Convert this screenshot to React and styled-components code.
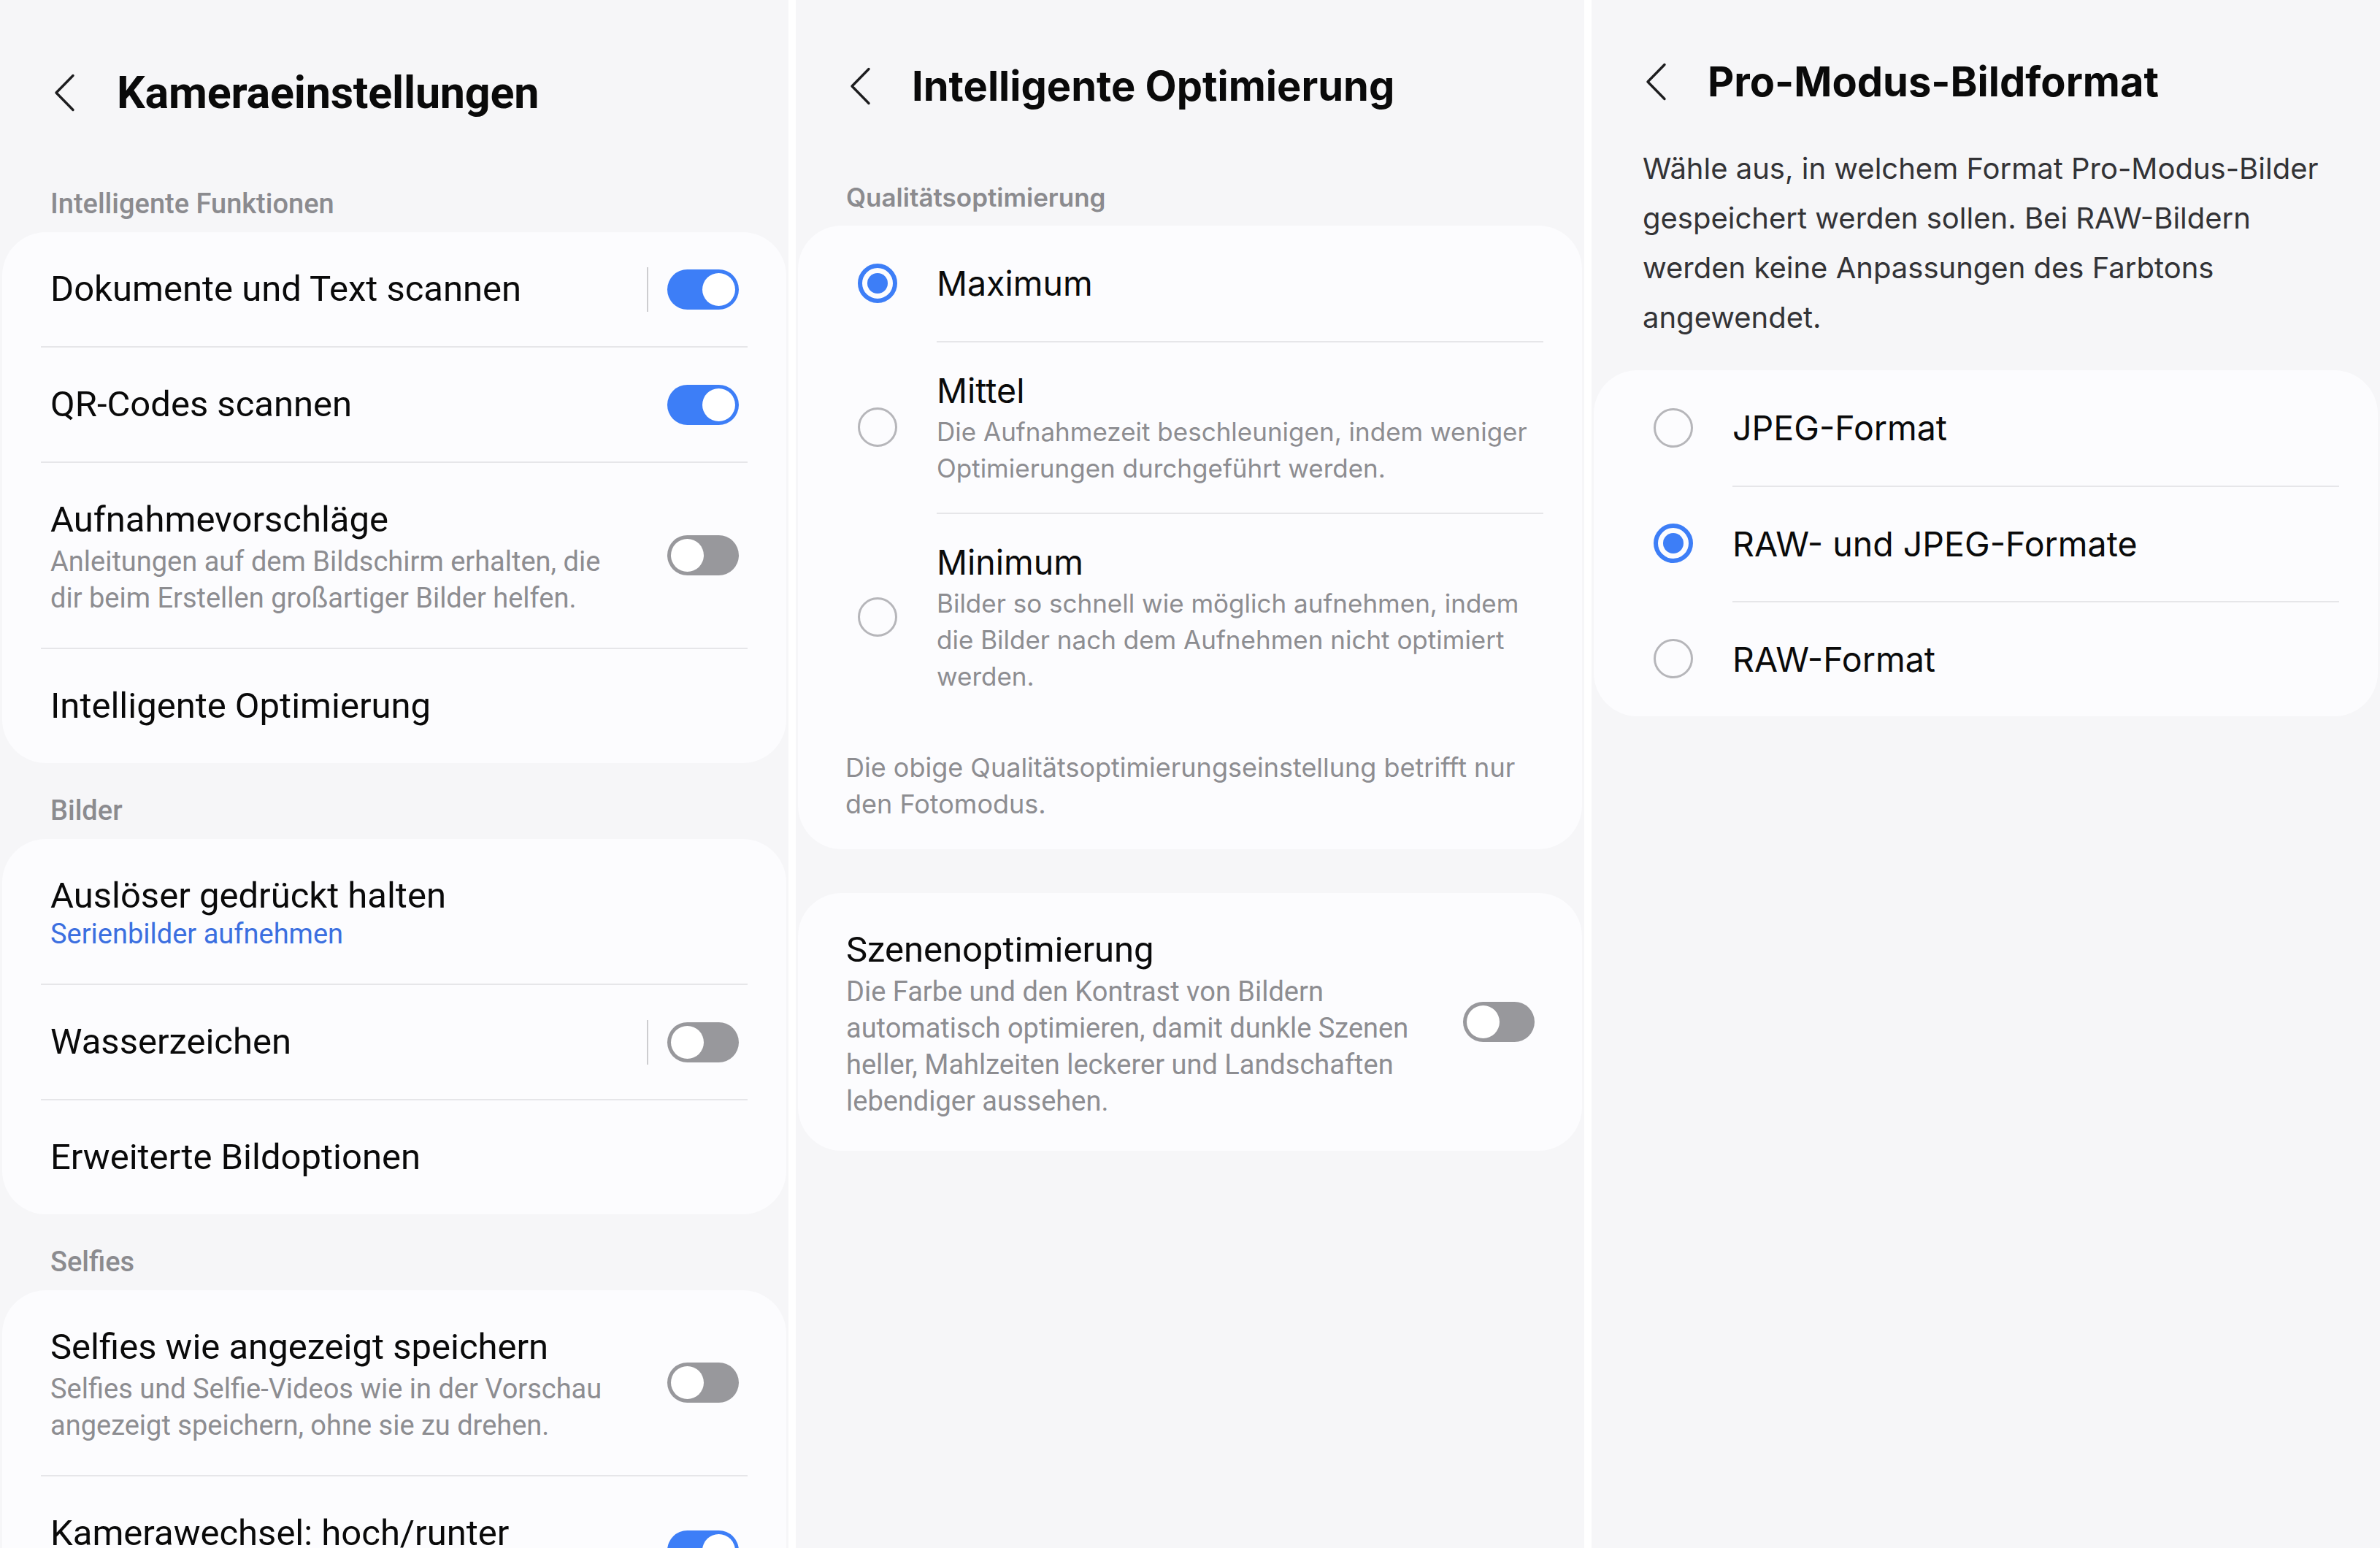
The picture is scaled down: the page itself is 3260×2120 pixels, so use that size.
import React from 'react'
import styled, { createGlobalStyle } from 'styled-components'

const narrow = `Roboto, 'Liberation Sans', sans-serif`
const wide = `Inter, 'Open Sans', sans-serif`

const GlobalStyle = createGlobalStyle`
  html, body {
    margin: 0;
    padding: 0;
    background: #ffffff;
  }
  * { box-sizing: border-box; }
`

const Screens = styled.div`
  display: flex;
  gap: 10px;
  width: 3260px;
  height: 2120px;
  overflow: hidden;
  background: #ffffff;
`

const Screen = styled.section`
  flex: 0 0 1080px;
  height: 2120px;
  overflow: hidden;
  display: flex;
  flex-direction: column;
  background: #f6f6f8;
  font-family: ${p => (p.$wide ? wide : narrow)};
  color: #0a0a0a;
`

const Header = styled.header`
  display: flex;
  align-items: center;
  height: 80px;
  margin-top: ${p => p.$top}px;
  padding-left: 74px;
`

const Back = styled.svg`
  flex: none;
  width: 29px;
  height: 52px;
  margin-right: ${p => p.$gap}px;
`

const Title = styled.h1`
  margin: 0;
  font-size: ${p => (p.$wide ? 56 : 61)}px;
  font-weight: 700;
  letter-spacing: ${p => (p.$wide ? '0' : '-0.2px')};
  line-height: 80px;
  white-space: nowrap;
`

const SectionLabel = styled.div`
  padding: ${p => p.$top}px 69px 19px;
  font-size: ${p => (p.$wide ? 35 : 38)}px;
  font-weight: ${p => (p.$wide ? 600 : 500)};
  line-height: 40px;
  color: #8b8b8f;
`

const Card = styled.div`
  margin: ${p => p.$top || 0}px 3px 0;
  border-radius: 60px;
  background: #fcfcfe;
  font-family: ${p => (p.$narrow ? narrow : 'inherit')};
`

const Row = styled.div`
  display: flex;
  align-items: center;
  margin: 0 53px;
  padding: 43px 12px 43px 13px;
  border-top: ${p => (p.$first ? 'none' : '2px solid #e6e6e9')};
`

const RowText = styled.div`
  flex: 1;
  min-width: 0;
  padding-right: 40px;
`

const RowTitle = styled.div`
  font-size: 49px;
  line-height: 70px;
  white-space: nowrap;
`

const RowSub = styled.div`
  margin-top: ${p => (p.$link ? -8 : -3)}px;
  font-size: 38px;
  line-height: 50px;
  white-space: pre;
  color: ${p => (p.$link ? '#3b6fe0' : '#8d8d91')};
`

const Divider = styled.span`
  flex: none;
  width: 2px;
  height: 61px;
  margin-right: 26px;
  background: #cdcdd0;
`

const Toggle = styled.span`
  position: relative;
  flex: none;
  width: 98px;
  height: 55px;
  border-radius: 28px;
  background: ${p => (p.$on ? '#3d7ef7' : '#98989c')};

  &::after {
    content: '';
    position: absolute;
    top: 5px;
    left: ${p => (p.$on ? 48 : 5)}px;
    width: 45px;
    height: 45px;
    border-radius: 50%;
    background: #ffffff;
  }
`

const RadioRow = styled.div`
  display: flex;
  align-items: center;
  padding-left: 82px;
`

const Radio = styled.span`
  flex: none;
  display: flex;
  align-items: center;
  justify-content: center;
  width: 54px;
  height: 54px;
  margin-right: 54px;
  border-radius: 50%;
  border: ${p => (p.$on ? '6px solid #3d7ef7' : '3px solid #b6b6ba')};

  &::after {
    content: '';
    display: ${p => (p.$on ? 'block' : 'none')};
    width: 28px;
    height: 28px;
    border-radius: 50%;
    background: #3d7ef7;
  }
`

const RadioBody = styled.div`
  flex: 1;
  min-height: 158px;
  margin-right: 53px;
  padding: 36px 0;
  display: flex;
  flex-direction: column;
  justify-content: center;
  border-top: ${p => (p.$first ? 'none' : '2px solid #e6e6e9')};
`

const RadioTitle = styled.div`
  font-size: 46.5px;
  line-height: 60px;
  white-space: nowrap;
`

const RadioSub = styled.div`
  margin-top: 1px;
  font-size: 35px;
  line-height: 50px;
  white-space: pre;
  color: #8d8d91;
`

const Note = styled.p`
  margin: 0;
  padding: 39px 53px 37px 65px;
  font-size: 36px;
  line-height: 50px;
  white-space: pre;
  color: #8d8d91;
`

const Intro = styled.p`
  margin: 45px 0 38px;
  padding: 0 60px 0 70px;
  font-size: 40px;
  line-height: 68px;
  white-space: pre;
  color: #333336;
`

function BackIcon({ gap }) {
  return (
    <Back viewBox="0 0 29 52" $gap={gap}>
      <polyline points="26,2.5 3,26 26,49.5" fill="none" stroke="#1d1d1f" strokeWidth="3.4" strokeLinecap="round" strokeLinejoin="round" />
    </Back>
  )
}

function SwitchRow({ first, title, sub, link, on, divided }) {
  return (
    <Row $first={first}>
      <RowText>
        <RowTitle>{title}</RowTitle>
        {sub ? <RowSub $link={link}>{sub}</RowSub> : null}
      </RowText>
      {divided ? <Divider /> : null}
      {on !== undefined ? <Toggle $on={on} /> : null}
    </Row>
  )
}

function Choice({ first, on, title, sub }) {
  return (
    <RadioRow>
      <Radio $on={on} />
      <RadioBody $first={first}>
        <RadioTitle>{title}</RadioTitle>
        {sub ? <RadioSub>{sub}</RadioSub> : null}
      </RadioBody>
    </RadioRow>
  )
}

const cameraSections = [
  {
    label: 'Intelligente Funktionen',
    rows: [
      { title: 'Dokumente und Text scannen', on: true, divided: true },
      { title: 'QR-Codes scannen', on: true },
      {
        title: 'Aufnahmevorschläge',
        sub: 'Anleitungen auf dem Bildschirm erhalten, die\ndir beim Erstellen großartiger Bilder helfen.',
        on: false,
      },
      { title: 'Intelligente Optimierung' },
    ],
  },
  {
    label: 'Bilder',
    rows: [
      { title: 'Auslöser gedrückt halten', sub: 'Serienbilder aufnehmen', link: true },
      { title: 'Wasserzeichen', on: false, divided: true },
      { title: 'Erweiterte Bildoptionen' },
    ],
  },
  {
    label: 'Selfies',
    rows: [
      {
        title: 'Selfies wie angezeigt speichern',
        sub: 'Selfies und Selfie-Videos wie in der Vorschau\nangezeigt speichern, ohne sie zu drehen.',
        on: false,
      },
      { title: 'Kamerawechsel: hoch/runter', sub: 'Zum Wechseln der Kamera wischen', on: true },
    ],
  },
]

export default function App() {
  return (
    <>
      <GlobalStyle />
      <Screens>
        <Screen>
          <Header $top={87}>
            <BackIcon gap={57} />
            <Title>Kameraeinstellungen</Title>
          </Header>
          {cameraSections.map((section, i) => (
            <React.Fragment key={section.label}>
              <SectionLabel $top={i === 0 ? 92 : 45}>{section.label}</SectionLabel>
              <Card>
                {section.rows.map((row, j) => (
                  <SwitchRow key={row.title} first={j === 0} {...row} />
                ))}
              </Card>
            </React.Fragment>
          ))}
        </Screen>

        <Screen $wide>
          <Header $top={78}>
            <BackIcon gap={56} />
            <Title $wide>Intelligente Optimierung</Title>
          </Header>
          <SectionLabel $top={92} $wide>Qualitätsoptimierung</SectionLabel>
          <Card>
            <Choice first on title="Maximum" />
            <Choice
              title="Mittel"
              sub={'Die Aufnahmezeit beschleunigen, indem weniger\nOptimierungen durchgeführt werden.'}
            />
            <Choice
              title="Minimum"
              sub={'Bilder so schnell wie möglich aufnehmen, indem\ndie Bilder nach dem Aufnehmen nicht optimiert\nwerden.'}
            />
            <Note>{'Die obige Qualitätsoptimierungseinstellung betrifft nur\nden Fotomodus.'}</Note>
          </Card>
          <Card $top={60} $narrow>
            <SwitchRow
              first
              title="Szenenoptimierung"
              sub={'Die Farbe und den Kontrast von Bildern\nautomatisch optimieren, damit dunkle Szenen\nheller, Mahlzeiten leckerer und Landschaften\nlebendiger aussehen.'}
              on={false}
            />
          </Card>
        </Screen>

        <Screen $wide>
          <Header $top={72}>
            <BackIcon gap={56} />
            <Title $wide>Pro-Modus-Bildformat</Title>
          </Header>
          <Intro>
            {'Wähle aus, in welchem Format Pro-Modus-Bilder\ngespeichert werden sollen. Bei RAW-Bildern\nwerden keine Anpassungen des Farbtons\nangewendet.'}
          </Intro>
          <Card>
            <Choice first title="JPEG-Format" />
            <Choice on title="RAW- und JPEG-Formate" />
            <Choice title="RAW-Format" />
          </Card>
        </Screen>
      </Screens>
    </>
  )
}
